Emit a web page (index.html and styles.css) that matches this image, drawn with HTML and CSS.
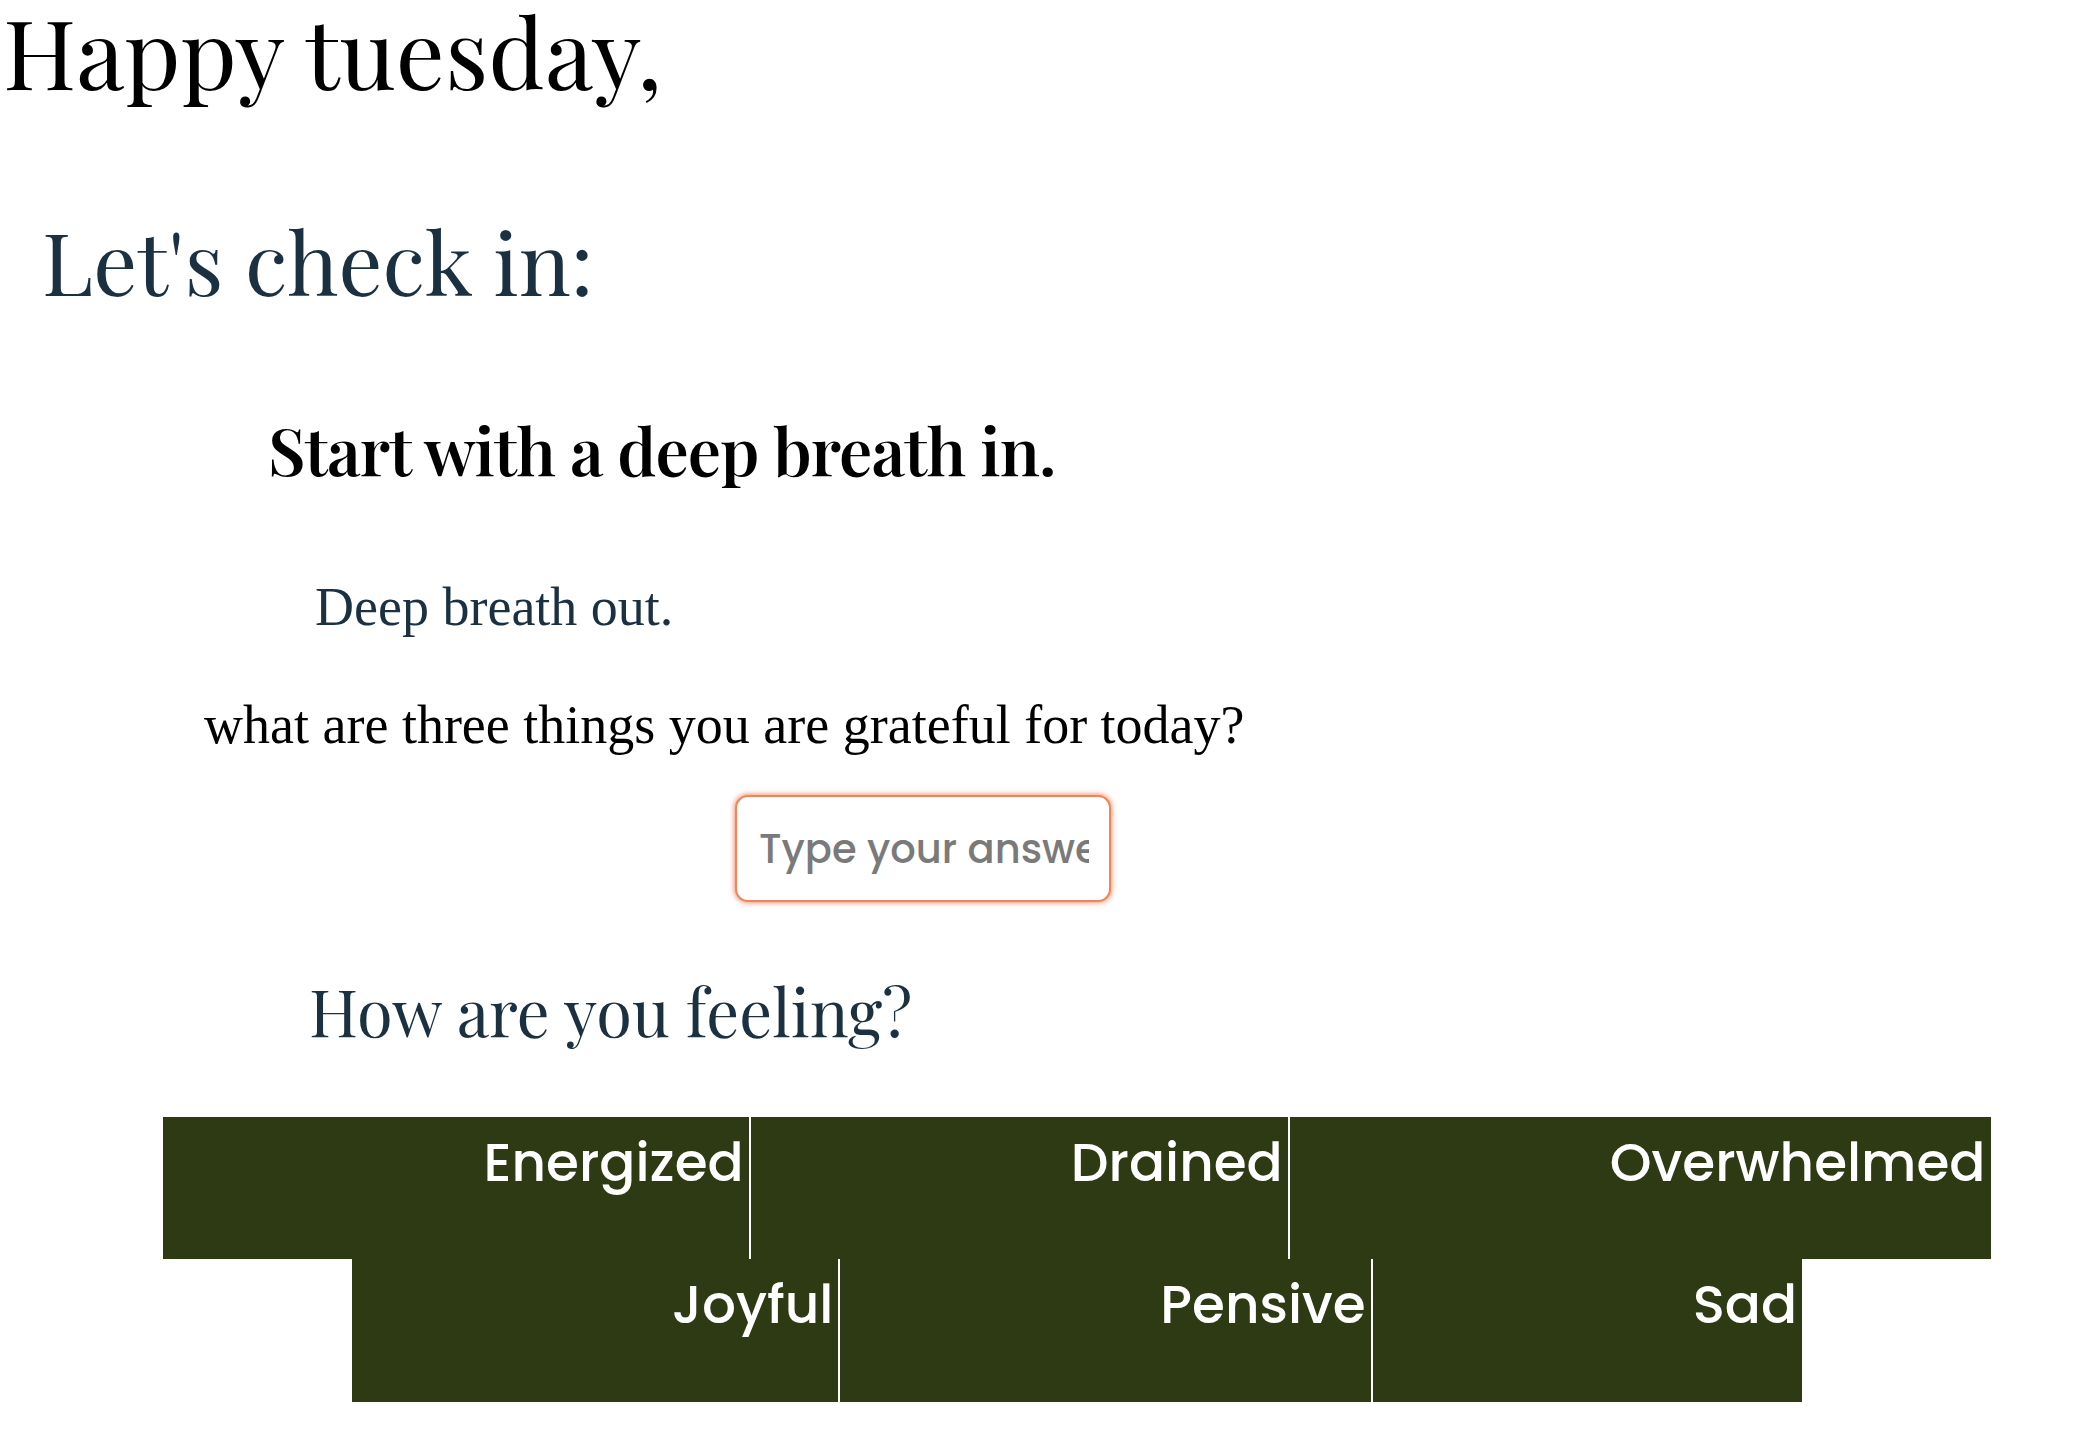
FILE: index.html
```html
<!DOCTYPE html>
<html lang="en">
<head>
<meta charset="utf-8">
<title>Check in</title>
<link rel="stylesheet" href="styles.css">
</head>
<body>
<h1 class="greeting">Happy tuesday,</h1>
<h2 class="checkin">Let's check in:</h2>
<h3 class="breath-in">Start with a deep breath in.</h3>
<p class="breath-out">Deep breath out.</p>
<p class="question">what are three things you are grateful for today?</p>
<input class="answer" type="text" placeholder="Type your answer here">
<h2 class="feeling">How are you feeling?</h2>
<div class="moods">
  <button class="mood">Energized</button>
  <button class="mood">Drained</button>
  <button class="mood">Overwhelmed</button>
  <button class="mood">Joyful</button>
  <button class="mood">Pensive</button>
  <button class="mood">Sad</button>
</div>
</body>
</html>
```
FILE: styles.css
```css
body {
  margin: 0;
  font-family: "Liberation Serif", "Times New Roman", serif;
  color: #000;
  background: #fff;
}

.greeting,
.checkin,
.breath-in,
.feeling {
  font-family: "Playfair Display", "Liberation Serif", serif;
  font-weight: normal;
  line-height: 1;
}

.greeting {
  font-size: 97px;
  margin: 1px 0 0 3px;
}

.checkin {
  font-size: 87px;
  color: #1b3142;
  margin: 119px 0 0 42px;
}

.breath-in {
  font-size: 66px;
  font-weight: 600;
  letter-spacing: -0.9px;
  margin: 112px 0 0 268px;
}

.breath-out {
  font-size: 54px;
  line-height: 1;
  color: #1b3142;
  margin: 98px 0 0 315px;
}

.question {
  font-size: 54px;
  line-height: 1;
  margin: 64px 0 0 204px;
}

.answer {
  display: block;
  box-sizing: border-box;
  width: 376px;
  height: 107px;
  margin: 43px 0 0 735px;
  padding: 0 20px 0 22px;
  border: 2px solid #f0855a;
  border-radius: 13px;
  box-shadow: 0 0 5px 1px rgba(240, 133, 90, 0.85);
  font-family: "Poppins", "Open Sans", sans-serif;
  font-size: 40px;
  font-weight: 500;
  color: #333;
  outline: none;
  background: #fff;
}

.answer::placeholder {
  color: #7a7a7a;
}

.feeling {
  font-size: 65px;
  color: #1b3142;
  margin: 76px 0 0 309px;
}

.moods {
  display: flex;
  flex-wrap: wrap;
  justify-content: center;
  margin-top: 74px;
  padding-left: 64px;
}

.mood {
  font-family: "Poppins", "Open Sans", sans-serif;
  font-size: 53.3px;
  font-weight: 500;
  line-height: 1;
  color: #fff;
  background: #2d3a14;
  border: none;
  border-left: 1px solid #fff;
  border-right: 1px solid #fff;
  border-radius: 0;
  padding: 19px 5px 70px 320px;
  margin: 0;
  cursor: pointer;
}
```
